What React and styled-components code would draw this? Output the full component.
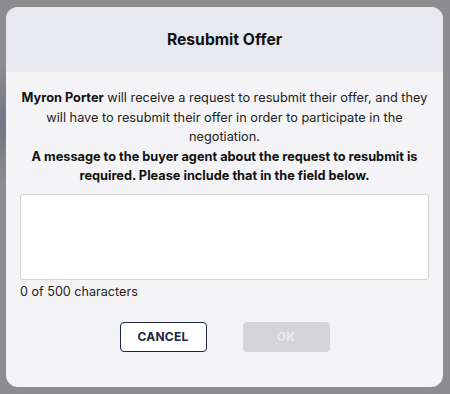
import React from "react";
import styled, { createGlobalStyle } from "styled-components";

const GlobalStyle = createGlobalStyle`
  html, body {
    margin: 0;
    padding: 0;
  }
  body {
    font-family: Inter, "Noto Sans", sans-serif;
  }
`;

const App = () => {
  return (
    <Backdrop>
      <GlobalStyle />
      <Modal>
        <Header>Resubmit Offer</Header>
        <Body>
          <Message>
            <strong>Myron Porter</strong> will receive a request to resubmit
            their offer, and they will have to resubmit their offer in order to
            participate in the negotiation.
            <br />
            <strong>
              A message to the buyer agent about the request to resubmit is
              required. Please include that in the field below.
            </strong>
          </Message>
          <TextArea />
          <Counter>0 of 500 characters</Counter>
          <Actions>
            <Button>CANCEL</Button>
            <Button primary disabled>
              OK
            </Button>
          </Actions>
        </Body>
      </Modal>
    </Backdrop>
  );
};

const Backdrop = styled.div`
  width: 450px;
  height: 394px;
  box-sizing: border-box;
  padding: 7px 7px 0 6px;
  background:
    radial-gradient(ellipse 40px 60px at 0px 125px, #6f7584 0%, rgba(111, 117, 132, 0) 100%),
    #8d8d8f;
  overflow: hidden;
`;

const Modal = styled.div`
  width: 437px;
  height: 380px;
  border-radius: 12px;
  overflow: hidden;
  background: #f4f4f6;
  display: flex;
  flex-direction: column;
`;

const Header = styled.div`
  height: 65px;
  flex-shrink: 0;
  background: #e8e8f0;
  display: flex;
  align-items: center;
  justify-content: center;
  font-size: 15.7px;
  font-weight: 700;
  color: #111;
`;

const Body = styled.div`
  padding: 16px 14px 0 14px;
  display: flex;
  flex-direction: column;
`;

const Message = styled.p`
  margin: 0;
  font-size: 12.75px;
  line-height: 19.6px;
  text-align: center;
  color: #222;

  strong {
    font-weight: 700;
    color: #111;
  }
`;

const TextArea = styled.textarea`
  margin-top: 8px;
  height: 86px;
  box-sizing: border-box;
  width: 100%;
  resize: none;
  background: #fff;
  border: 1px solid #d2d2d6;
  border-radius: 3px;
  font-family: inherit;
`;

const Counter = styled.div`
  margin-top: 3px;
  font-size: 12.6px;
  line-height: 17px;
  color: #222;
`;

const Actions = styled.div`
  margin-top: 22px;
  display: flex;
  justify-content: center;
  gap: 36px;
`;

const Button = styled.button`
  width: 87px;
  height: 30px;
  box-sizing: border-box;
  border-radius: 4px;
  font-family: inherit;
  font-size: 12px;
  font-weight: 700;
  letter-spacing: 0.2px;
  border: 1px solid ${(p) => (p.primary ? "#d4d4d8" : "#1c2541")};
  background: ${(p) => (p.primary ? "#d4d4d8" : "#fff")};
  color: ${(p) => (p.primary ? "#ebebee" : "#1c2541")};
  cursor: ${(p) => (p.disabled ? "default" : "pointer")};
`;

export default App;
